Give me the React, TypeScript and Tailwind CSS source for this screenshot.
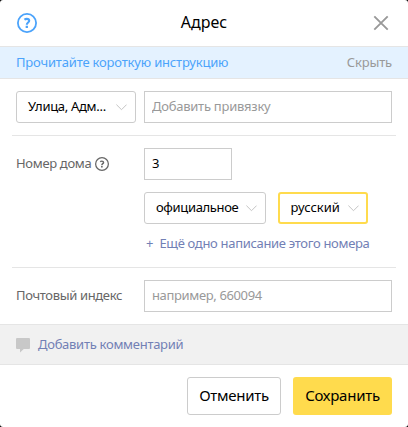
import type { ReactNode } from "react";

function Chevron() {
  return (
    <svg width="11" height="7" viewBox="0 0 11 7" fill="none" stroke="#c4c4c4" strokeWidth="1" className="shrink-0">
      <path d="M0.4 0.6 5.5 5.7 10.6 0.6" />
    </svg>
  );
}

function Select({ className, children }: { className: string; children: ReactNode }) {
  return (
    <button className={`flex h-8 shrink-0 items-center justify-between rounded-[3px] bg-white text-black ${className}`}>
      <span className="pb-0.5 whitespace-nowrap">{children}</span>
      <Chevron />
    </button>
  );
}

function HelpIcon({ size, width }: { size: number; width: number }) {
  return (
    <svg width={size} height={size} viewBox="0 0 20 20" fill="none" stroke="currentColor" strokeWidth={width} className="shrink-0">
      <circle cx="10" cy="10" r="9.1" />
      <path strokeWidth="2.1" d="M7.4 6.7C8.1 6.2 8.9 5.9 9.8 5.9c1.5 0 2.4.7 2.4 1.9 0 1.7-2.4 1.8-2.4 3.9" />
      <path strokeWidth="2.3" d="M9.8 12.8v2.1" />
    </svg>
  );
}

export default function App() {
  return (
    <div className="h-[427px] w-[408px] bg-black">
      <div className="flex h-full flex-col overflow-hidden rounded-[3px] bg-white font-['Noto_Sans','Open_Sans',sans-serif] text-[13px] leading-4">
        <header className="flex h-[47px] shrink-0 items-center justify-between border-b border-[#e5e5e5] px-[17px]">
          <span className="text-[#4ba3fb]"><HelpIcon size={20} width={1.8} /></span>
          <h1 className="pb-0.5 text-[16px] leading-5 text-black">Адрес</h1>
          <svg width="20" height="20" viewBox="0 0 20 20" stroke="#999" strokeWidth="1.9" fill="none">
            <path d="M3.3 3.3 16.7 16.7M16.7 3.3 3.3 16.7" />
          </svg>
        </header>
        <div className="flex h-8 shrink-0 items-center justify-between border-b border-[#e5e5e5] bg-[#e4f2ff] px-4 pb-0.5">
          <a className="tracking-[-0.18px] text-[#4ba3fb]">Прочитайте короткую инструкцию</a>
          <a className="tracking-[-0.15px] text-[#999]">Скрыть</a>
        </div>
        <main className="flex flex-col px-3">
          <div className="flex h-[57px] gap-2 border-b border-[#e5e5e5] px-1 pt-3">
            <Select className="w-[120px] border border-[#ccc] pr-[8px] pl-[11px] tracking-[-0.3px]">Улица, Адм...</Select>
            <input className="h-8 w-[248px] border border-[#ccc] px-[7px] pb-0.5 tracking-[-0.25px] outline-none placeholder:text-[#999]" placeholder="Добавить привязку" />
          </div>
          <div className="flex h-[132px] border-b border-[#e5e5e5] px-1 pt-3">
            <div className="flex h-8 w-32 shrink-0 items-center gap-1 text-[#666]">
              <span className="pb-0.5 tracking-[-0.33px]">Номер дома</span>
              <HelpIcon size={14} width={1.8} />
            </div>
            <div className="flex flex-col gap-3">
              <input className="h-8 w-[88px] border border-[#ccc] px-[7px] pb-0.5 text-black outline-none" defaultValue="3" />
              <div className="flex gap-3">
                <Select className="w-[122px] border border-[#ccc] pr-[8px] pl-[11px] tracking-[-0.35px]">официальное</Select>
                <Select className="w-[90px] border-2 border-[#ffdb4d] pr-[7px] pl-[10.5px] tracking-[-0.03px]">русский</Select>
              </div>
              <a className="-mt-px flex gap-[6px] pl-[2px] whitespace-nowrap text-[#7280b5]">
                <span>+</span>
                <span className="tracking-[-0.32px]">Ещё одно написание этого номера</span>
              </a>
            </div>
          </div>
          <div className="flex h-14 px-1 pt-3">
            <label className="flex h-8 w-32 shrink-0 items-center pb-0.5 tracking-[-0.35px] text-[#666]">Почтовый индекс</label>
            <input className="h-8 w-[248px] border border-[#ccc] px-[7px] pb-0.5 tracking-[-0.36px] outline-none placeholder:text-[#999]" placeholder="например, 660094" />
          </div>
        </main>
        <div className="flex h-[41px] shrink-0 items-center gap-2 border-y border-[#e5e5e5] bg-[#f1f1f1] px-4">
          <svg width="14" height="15" viewBox="0 0 14 15" fill="#c8c8c8" className="mt-0.5">
            <path d="M1 0h12a1 1 0 0 1 1 1v9a1 1 0 0 1-1 1H7.8L4 14.5V11H1a1 1 0 0 1-1-1V1a1 1 0 0 1 1-1Z" />
          </svg>
          <a className="pb-0.5 tracking-[-0.28px] text-[#7280b5]">Добавить комментарий</a>
        </div>
        <footer className="flex justify-end gap-3 px-4 pt-3 text-[15px] tracking-[-0.27px] text-black">
          <button className="h-[38px] w-[94px] rounded-[3px] border border-[#ccc] pb-0.5">Отменить</button>
          <button className="h-[38px] w-[99px] rounded-[3px] bg-[#ffdb4d] pb-0.5">Сохранить</button>
        </footer>
      </div>
    </div>
  );
}
